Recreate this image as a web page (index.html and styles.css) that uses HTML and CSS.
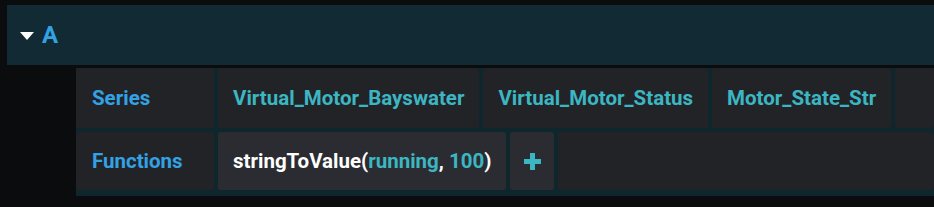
FILE: index.html
```html
<!DOCTYPE html>
<html>
<head>
<meta charset="utf-8">
<link rel="stylesheet" href="styles.css">
</head>
<body>
<div class="header">
  <span class="caret"></span>
  <span class="title">A</span>
</div>
<div class="query">
  <div class="row">
    <div class="cell label">Series</div>
    <div class="cell value">Virtual_Motor_Bayswater</div>
    <div class="cell value">Virtual_Motor_Status</div>
    <div class="cell value">Motor_State_Str</div>
    <div class="cell grow"></div>
  </div>
  <div class="row">
    <div class="cell label">Functions</div>
    <div class="cell func"><span class="expr"><span class="fn">stringToValue(</span><span class="arg">running</span><span class="fn">, </span><span class="arg">100</span><span class="fn">)</span></span></div>
    <div class="cell plus">
      <svg width="17" height="17" viewBox="0 0 17 17"><rect x="6" y="0" width="5" height="17" fill="#3cb6c2"/><rect x="0" y="6" width="17" height="5" fill="#3cb6c2"/></svg>
    </div>
    <div class="cell grow"></div>
  </div>
</div>
</body>
</html>
```
FILE: styles.css
```css
html, body {
  margin: 0;
  padding: 0;
  background: #0b0c0e;
  font-family: Roboto, "Liberation Sans", sans-serif;
  overflow: hidden;
}
.header {
  margin: 5px 0 0 7px;
  height: 60px;
  background: #112a33;
  display: flex;
  align-items: center;
  padding-left: 13px;
}
.caret {
  width: 0;
  height: 0;
  border-left: 7.5px solid transparent;
  border-right: 7.5px solid transparent;
  border-top: 8px solid #ffffff;
  margin-right: 8px;
  margin-top: 1px;
}
.title {
  color: #33a2e5;
  font-size: 24px;
  font-weight: 700;
}
.query {
  margin: 3px 0 0 76px;
  background: #10262d;
  display: flex;
  flex-direction: column;
  gap: 4px;
  padding-bottom: 6px;
}
.row {
  display: flex;
  gap: 4px;
  height: 60px;
}
.row + .row {
  height: 58px;
}
.cell {
  background: #222327;
  border-radius: 3px;
  display: flex;
  align-items: center;
  padding: 0 15px;
  font-size: 20.5px;
  font-weight: 700;
  white-space: pre;
}
.label {
  width: 138px;
  box-sizing: border-box;
  padding-left: 16px;
  color: #33a2e5;
}
.value {
  color: #3cb6c2;
}
.func {
  background: #2b2c31;
}
.fn {
  color: #ffffff;
}
.arg {
  color: #3cb6c2;
}
.plus {
  background: #2b2c31;
  width: 44px;
  box-sizing: border-box;
  padding: 0;
  justify-content: center;
}
.grow {
  flex: 1;
}
```
